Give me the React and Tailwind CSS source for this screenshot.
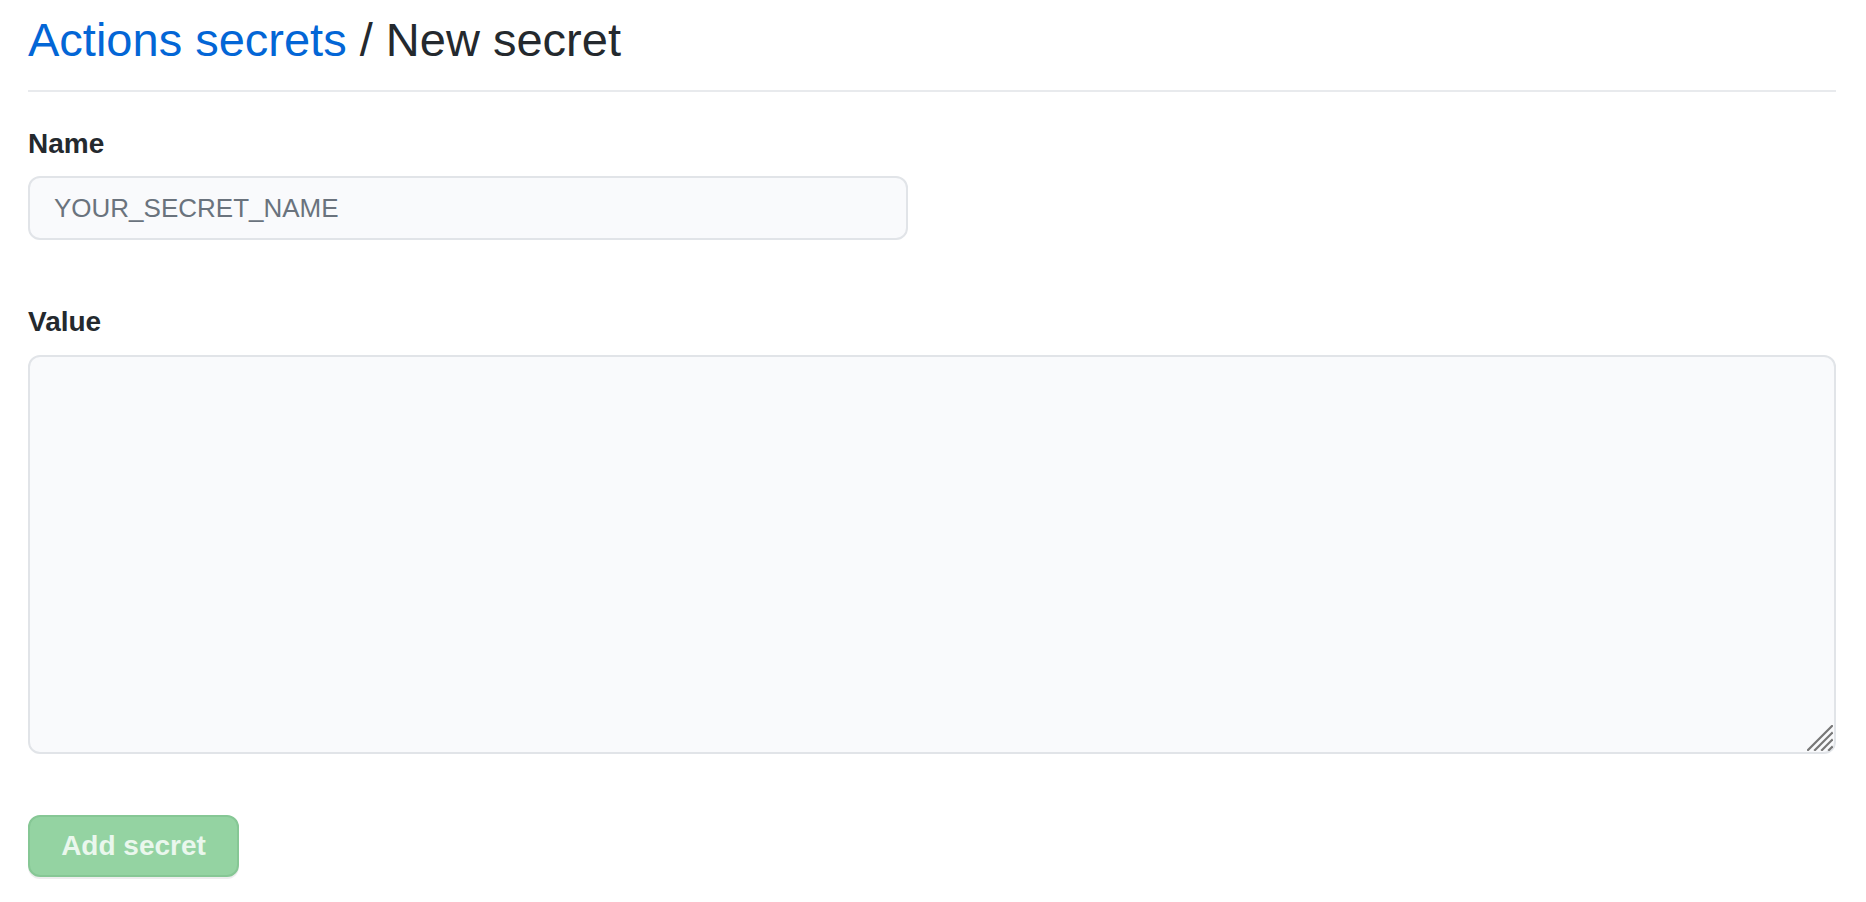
import React from "react";

const sans = { fontFamily: '"Liberation Sans", Arial, sans-serif' };

const ResizeGrip = () => (
  <svg
    className="absolute right-[3px] bottom-[3px] pointer-events-none"
    width="26"
    height="26"
    viewBox="0 0 26 26"
  >
    <g stroke="#777" strokeWidth="2.2" strokeLinecap="square">
      <line x1="1" y1="25" x2="25" y2="1" />
      <line x1="8" y1="25" x2="25" y2="8" />
      <line x1="15" y1="25" x2="25" y2="15" />
      <line x1="22" y1="25" x2="25" y2="22" />
    </g>
  </svg>
);

export default function App() {
  return (
    <div className="min-h-screen bg-white pt-[4px] pl-[28px] pr-[30px] text-[#24292e]" style={sans}>
      {/* Subhead */}
      <div className="pb-[14px] border-b-2 border-[#e8eaed]">
        <h2 className="text-[47px] leading-[72px] font-normal">
          <a href="#" className="text-[#0366d6]">
            Actions secrets
          </a>{" "}
          / New secret
        </h2>
      </div>

      <form className="pt-[31px]" onSubmit={(e) => e.preventDefault()}>
        {/* Name */}
        <div>
          <label className="block text-[28px] leading-[42px] font-bold mb-[11px]">Name</label>
          <input
            type="text"
            placeholder="YOUR_SECRET_NAME"
            className="block w-[880px] h-[64px] px-[24px] text-[26px] bg-[#f9fafc] border-2 border-[#e1e4e8] rounded-[12px] outline-none placeholder:text-[#6a737d]"
            style={sans}
          />
        </div>

        {/* Value */}
        <div className="mt-[61px]">
          <label className="block text-[28px] leading-[42px] font-bold mb-[12px]">Value</label>
          <div className="relative">
            <textarea
              className="block w-full h-[399px] px-[24px] py-[10px] text-[26px] bg-[#f9fafc] border-2 border-[#e1e4e8] rounded-[12px] outline-none resize-none"
              style={sans}
            />
            <ResizeGrip />
          </div>
        </div>

        {/* Submit */}
        <div className="mt-[61px]">
          <button
            type="submit"
            disabled
            className="h-[62px] w-[211px] rounded-[12px] border-2 border-[#86c795] bg-[#94d3a2] text-[28px] font-bold text-[#eaf7ed] shadow-[0_2px_0_rgba(27,31,35,0.08)]"
            style={sans}
          >
            Add secret
          </button>
        </div>
      </form>
    </div>
  );
}
